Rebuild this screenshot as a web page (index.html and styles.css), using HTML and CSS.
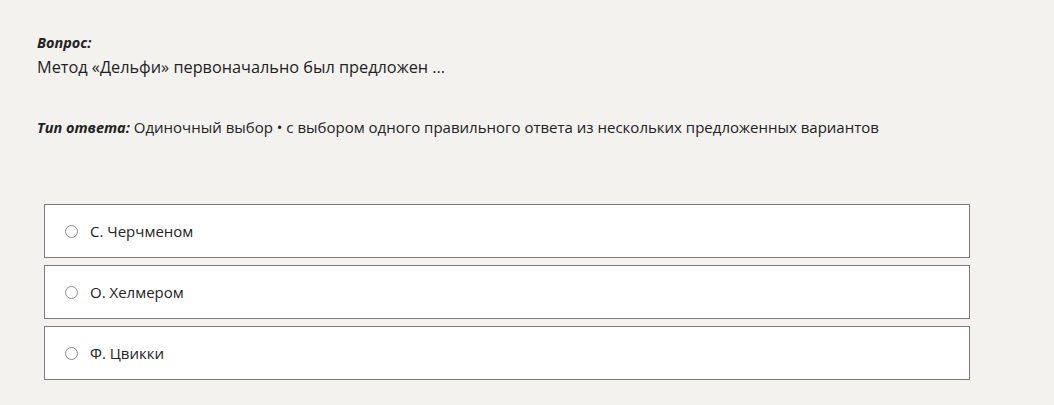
FILE: index.html
```html
<!DOCTYPE html>
<html lang="ru">
<head>
<meta charset="utf-8">
<link rel="stylesheet" href="styles.css">
</head>
<body>
<div class="page">
  <div class="question">
    <div class="label">Вопрос:</div>
    <div class="qtext">Метод «Дельфи» первоначально был предложен ...</div>
  </div>
  <div class="type"><span class="label">Тип ответа:</span> Одиночный выбор • с выбором одного правильного ответа из нескольких предложенных вариантов</div>
  <div class="options">
    <label class="option"><span class="radio"></span><span class="otext">С. Черчменом</span></label>
    <label class="option"><span class="radio"></span><span class="otext">О. Хелмером</span></label>
    <label class="option"><span class="radio"></span><span class="otext">Ф. Цвикки</span></label>
  </div>
</div>
</body>
</html>
```
FILE: styles.css
```css
html, body {
  margin: 0;
  padding: 0;
  background: #f3f2ef;
}
body {
  font-family: "Open Sans", "Noto Sans", sans-serif;
  font-size: 15px;
  color: #222;
}
.page {
  padding: 33px 0 0 37px;
}
.label {
  font-weight: 700;
  font-style: italic;
  font-size: 14.5px;
}
.question .label {
  line-height: 20px;
}
.qtext {
  font-size: 16.3px;
  line-height: 24px;
  margin-top: 2px;
}
.type {
  margin-top: 36px;
  line-height: 24px;
}
.options {
  margin-top: 64px;
  margin-left: 7px;
  width: 926px;
  display: flex;
  flex-direction: column;
  gap: 7px;
}
.option {
  display: flex;
  align-items: center;
  height: 52px;
  background: #fff;
  border: 1px solid #7a7a7a;
  padding-left: 20px;
}
.radio {
  border: 1px solid #8a8a8a;
  border-radius: 50%;
  background: #fff;
  box-sizing: border-box;
  width: 13px;
  height: 13px;
}
.otext {
  margin-left: 12px;
  font-size: 15px;
}
```
